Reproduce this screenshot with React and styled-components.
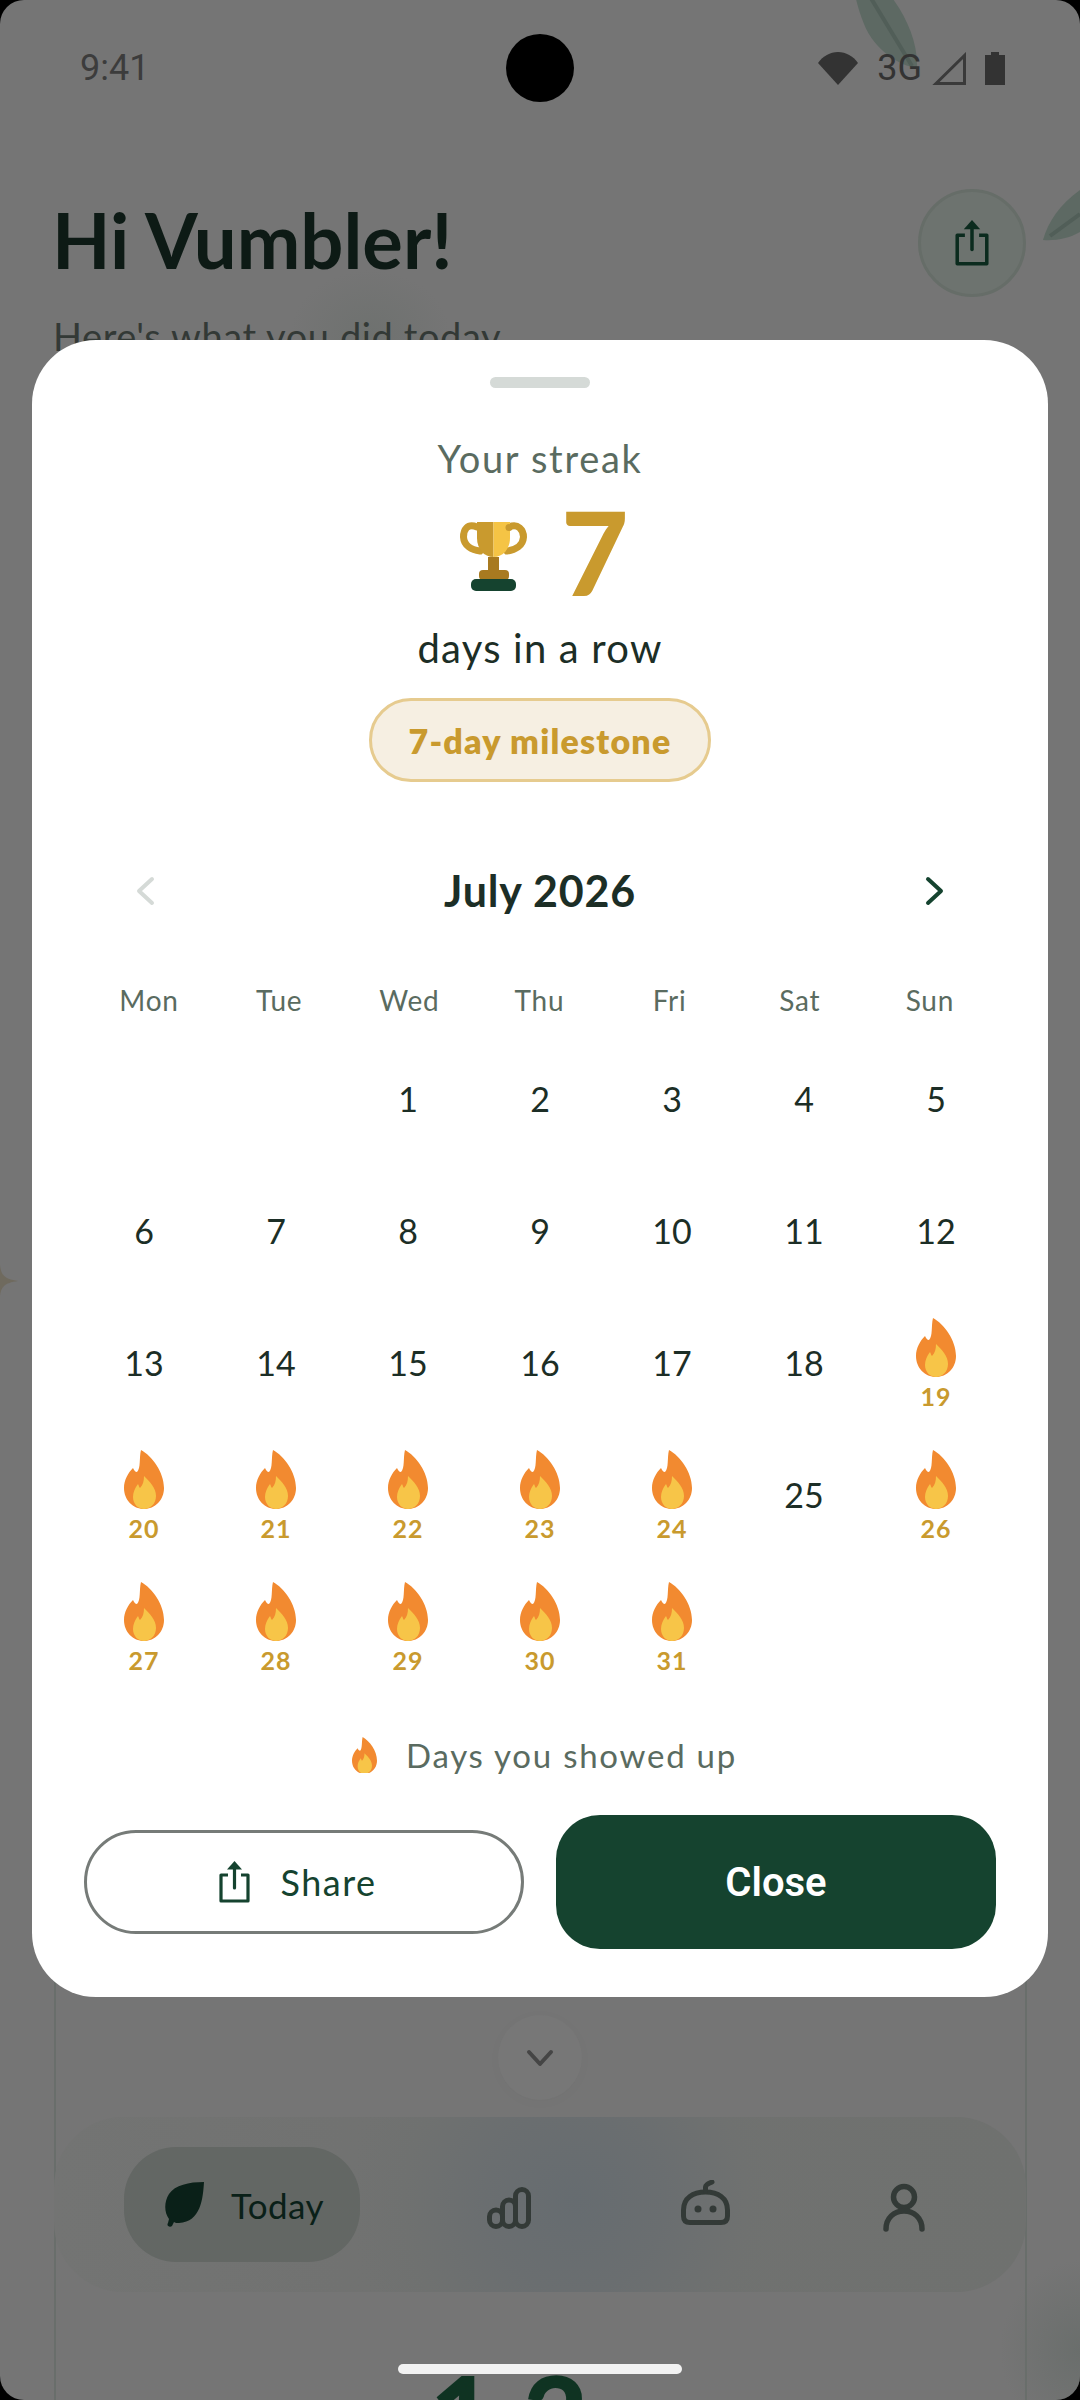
import React from "react";
import styled, { createGlobalStyle } from "styled-components";

const Global = createGlobalStyle`
  html, body { margin: 0; padding: 0; background: #000; }
  * { box-sizing: border-box; }
`;
const sans = `"Lato", "Noto Sans", sans-serif`;
const roboto = `"Roboto", "Liberation Sans", sans-serif`;

const Screen = styled.div`
  position: relative; width: 1080px; height: 2400px; overflow: hidden;
  background: #757575; border-radius: 24px; font-family: ${sans};
`;
const StatusBar = styled.div`
  position: relative; height: 136px; padding: 0 75px 0 80px; display: flex; align-items: center; justify-content: space-between;
  font-family: ${roboto}; font-size: 36px; color: #3c3c3c;
`;
const Camera = styled.div`
  position: absolute; left: 506px; top: 34px; width: 68px; height: 68px; border-radius: 50%; background: #000;
`;
const StatusIcons = styled.div`display: flex; align-items: center; color: #333;`;
const NetLabel = styled.span`font-size: 36px; line-height: 36px; margin: 0 10px 0 19px;`;
const BatteryIcon = styled.svg`margin-left: 19px;`;
const Leaf = styled.svg`position: absolute; left: ${p => p.$x}px; top: ${p => p.$y}px;`;
const Blob = styled.div`
  position: absolute; left: ${p => p.$x}px; top: ${p => p.$y}px; width: ${p => p.$w}px; height: ${p => p.$h}px;
  background: radial-gradient(closest-side, ${p => p.$c}, rgba(117,117,117,0));
`;
const Header = styled.div`
  position: relative; display: flex; justify-content: space-between; align-items: flex-start; padding: 53px 54px 0 54px;
`;
const Title = styled.h1`
  margin: 5px 0 0 -2px; font-size: 76px; line-height: 92px; font-weight: 700; color: #0d1a15; font-family: ${sans};
`;
const Sub = styled.p`margin: 26px 0 0 -1px; font-size: 38px; line-height: 48px; color: #333936; letter-spacing: 0.6px;`;
const RoundBtn = styled.div`
  width: 108px; height: 108px; border-radius: 50%; background: #6d736f; border: 3px solid #666d68;
  display: flex; align-items: center; justify-content: center; color: #0b2b1e;
`;
const Card = styled.div`
  position: absolute; left: 54px; top: 1900px; width: 973px; height: 560px; border: 2px solid #696e6b; border-bottom: 0;
`;
const Chevron = styled.div`
  position: absolute; left: 498px; top: 2015px; width: 84px; height: 85px; border-radius: 50%;
  background: #777777; box-shadow: 0 2px 14px rgba(0,0,0,.025); display: flex; align-items: center; justify-content: center;
`;
const Nav = styled.div`
  position: absolute; left: 54px; top: 2117px; width: 972px; height: 175px; border-radius: 70px;
  background: radial-gradient(circle at 521px 84px, #666c70 0, #6a6e70 90px, #6f7170 170px, rgba(112,114,112,0) 225px),
    linear-gradient(to right, #737473, #717271 30%, #6f716f);
  display: flex; align-items: center; padding: 0 0 0 70px;
`;
const Pill = styled.div`
  width: 236px; height: 115px; border-radius: 52px; background: #636764; display: flex; align-items: center;
  gap: 26px; padding: 0 0 0 41px; font-size: 35px; color: #0a2018; letter-spacing: 0.4px;
`;
const NavIcon = styled.div`
  position: absolute; left: ${p => p.$x}px; top: ${p => p.$y}px; display: flex;
`;
const Home = styled.div`
  position: absolute; left: 398px; top: 2364px; width: 284px; height: 10px; border-radius: 5px; background: #f2f2f2;
`;
const BigNum = styled.div`
  position: absolute; left: 430px; top: 2350px; font-size: 112px; line-height: 130px; font-weight: 900; color: #0f3322; letter-spacing: 28px; font-family: ${sans};
`;
const Sheet = styled.div`
  position: absolute; left: 32px; top: 340px; width: 1016px; height: 1657px; background: #fff; border-radius: 64px;
  display: flex; flex-direction: column; align-items: center; padding-top: 37px;
`;
const Handle = styled.div`width: 100px; height: 11px; border-radius: 6px; background: #d5dad7;`;
const Eyebrow = styled.div`margin-top: 48px; font-size: 38px; line-height: 44px; color: #5a6b60; letter-spacing: 1.7px;`;
const StreakRow = styled.div`display: flex; align-items: center; height: 100px; margin-top: 22px; gap: 34px;`;
const TrophyBox = styled.div`display: flex; margin: 9px 0 0 9px;`;
const StreakNum = styled.div`font-size: 116px; line-height: 100px; font-weight: 900; color: #c99a2e;`;
const Days = styled.div`margin-top: 22px; font-size: 40px; line-height: 48px; color: #1c2e26; letter-spacing: 1.2px;`;
const Milestone = styled.div`
  margin-top: 26px; width: 342px; height: 84px; border-radius: 42px; background: #f6efe2; border: 3px solid #e6cb8f;
  display: flex; align-items: center; justify-content: center; font-size: 34px; font-weight: 800; color: #c99a2e; letter-spacing: 1.2px;
`;
const MonthRow = styled.div`
  margin-top: 84px; width: 100%; padding: 0 103px; display: flex; align-items: center; justify-content: space-between; height: 50px;
`;
const Month = styled.div`font-size: 43px; line-height: 50px; font-weight: 700; color: #1c2e26; letter-spacing: 0.8px;`;
const Weekdays = styled.div`
  margin-top: 66px; align-self: flex-start; margin-left: 52px; width: 911px; display: grid; grid-template-columns: repeat(7, 1fr);
`;
const Weekday = styled.div`text-align: center; font-size: 28px; line-height: 36px; color: #5a6b60; letter-spacing: 0.8px;`;
const Dates = styled.div`
  margin-top: 14px; align-self: flex-start; margin-left: 46px; display: grid; grid-template-columns: repeat(7, 132px); grid-auto-rows: 132px;
`;
const Cell = styled.div`
  display: flex; flex-direction: column; align-items: center; justify-content: center; grid-column: ${p => p.$start || "auto"};
  font-size: 34px; color: #1c2e26;
`;
const FlameNum = styled.div`margin: 7px 0 -2px; font-size: 25px; line-height: 24px; font-weight: 700; color: #c99a2e; letter-spacing: 1px;`;
const Legend = styled.div`
  margin: 43px 0 0 9px; display: flex; align-items: center; gap: 29px; font-size: 33px; line-height: 40px; color: #5a6b60; letter-spacing: 1.75px;
`;
const Actions = styled.div`
  margin-top: 40px; width: 100%; padding: 0 52px; display: flex; align-items: center; gap: 32px;
`;
const ShareBtn = styled.button`
  width: 440px; height: 104px; border-radius: 52px; border: 3px solid #767b78; background: #fff; color: #15432f;
  display: flex; align-items: center; justify-content: center; gap: 30px; font-family: ${sans}; font-size: 36px; letter-spacing: 1.5px; padding: 0 12px 0 0;
`;
const CloseBtn = styled.button`
  width: 440px; height: 134px; border-radius: 44px; border: 0; background: #15432f; color: #fff;
  font-family: ${roboto}; font-weight: 600; font-size: 40px; padding: 0;
`;

const Flame = ({ w = 40 }) => (
  <svg width={w} height={w * 59 / 40} viewBox="0 0 40 59" aria-hidden="true">
    <path fill="#f28a30" d="M17 0C28 6 40 22 40 38C40 50 31 59 20 59C9 59 0 50 0 38C0 30 4 23 9 18C10 20 11 22 13 22C17 18 15 8 17 0Z" />
    <path fill="#f7c548" d="M20 26C26 32 32 38 32 46C32 54 26 59 20 59C14 59 9 54 9 47C9 42 11 38 14 34C15 36 15 37 16 38C19 35 20 31 20 26Z" />
  </svg>
);
const Trophy = () => (
  <svg width="67" height="69" viewBox="0 0 67 69" aria-hidden="true">
    <path fill="none" stroke="#c99a2e" strokeWidth="7" strokeLinecap="round" d="M17 5C7 1 3.500 8 3.500 15C4 24 12 28 20 29" />
    <path fill="none" stroke="#c99a2e" strokeWidth="7" strokeLinecap="round" d="M49 5C58 1 63.500 8 63.500 15C63 24 55 28 47 29" />
    <path fill="#c99a2e" d="M17 0H33.500V35C24 35 17 27 17 16Z" />
    <path fill="#f5c445" d="M33.500 0H50V16C50 27 43 35 33.500 35Z" />
    <circle cx="49" cy="5.500" r="3.500" fill="#c99a2e" />
    <rect x="28" y="35" width="11" height="14" fill="#a87a20" />
    <rect x="19" y="48" width="30" height="10" rx="4" fill="#a87a20" />
    <rect x="11" y="57" width="45" height="12" rx="5" fill="#15432f" />
  </svg>
);
const ShareIcon = ({ w = 31, h = 42 }) => (
  <svg width={w} height={h} viewBox="0 0 31 42" fill="none" stroke="currentColor" aria-hidden="true">
    <path strokeWidth="3.200" strokeLinejoin="round" d="M9 14H2V40H29V14H22" />
    <path strokeWidth="3.200" strokeLinecap="round" d="M15.500 6V27" />
    <path fill="currentColor" stroke="none" d="M15.500 0L23 8.500H8Z" />
  </svg>
);
const ChevronIcon = ({ dir, color }) => (
  <svg width="20" height="30" viewBox="0 0 20 30" fill="none" stroke={color} strokeWidth="4" strokeLinecap="round" strokeLinejoin="round" aria-hidden="true">
    <path d={dir === "left" ? "M17 3L4 15L17 27" : "M3 3L16 15L3 27"} />
  </svg>
);

const FLAMES = new Set([19, 20, 21, 22, 23, 24, 26, 27, 28, 29, 30, 31]);
const days = Array.from({ length: 31 }, (_, i) => i + 1);

export default function App() {
  return (
    <>
      <Global />
      <Screen>
        <Blob $x={290} $y={270} $w={160} $h={130} $c="#6e716f" />
        <Blob $x={1000} $y={2260} $w={160} $h={180} $c="#6a6e6c" />
        <Leaf $x={850} $y={-10} width="72" height="90" viewBox="0 0 72 90">
          <path fill="#5d6963" d="M4 0H36C56 24 68 52 67 78C50 76 24 60 14 34C9 22 6 10 4 0Z" />
          <path stroke="#515e58" strokeWidth="4" fill="none" d="M16 0L62 76" />
        </Leaf>
        <Leaf $x={1040} $y={188} width="40" height="54" viewBox="0 0 40 54">
          <path fill="#5d6963" d="M40 2C20 16 8 34 3 52C16 53 30 50 40 44Z" />
          <path stroke="#515e58" strokeWidth="4" fill="none" d="M10 48L40 26" />
        </Leaf>
        <Leaf $x={-14} $y={1265} width="32" height="32" viewBox="0 0 32 32">
          <path fill="#6f6a5e" d="M14 0C15 10 18 14 32 16C18 18 15 22 14 32C13 22 10 18 0 16C10 14 13 10 14 0Z" />
        </Leaf>
        <StatusBar>
          <span>9:41</span>
          <StatusIcons>
            <svg width="40" height="33" viewBox="0 0 40 33"><path fill="#333" d="M0 11C5 4 12 0 20 0C28 0 35 4 40 11L20 33Z" /></svg>
            <NetLabel>3G</NetLabel>
            <svg width="34" height="33" viewBox="0 0 34 33"><path fill="none" stroke="#3a3a3a" strokeWidth="3" d="M4 31.500L32.500 3.500V31.500Z" /></svg>
            <BatteryIcon width="20" height="33" viewBox="0 0 20 33"><path fill="#333" d="M6 0H14V3H20V33H0V3H6Z" /></BatteryIcon>
          </StatusIcons>
        </StatusBar>
        <Camera />
        <Header>
          <div>
            <Title>Hi Vumbler!</Title>
            <Sub>Here's what you did today</Sub>
          </div>
          <RoundBtn><ShareIcon w={34} h={46} /></RoundBtn>
        </Header>

        <Card />
        <Chevron>
          <svg width="28" height="18" viewBox="0 0 28 18" fill="none" stroke="#454545" strokeWidth="4" strokeLinecap="round" strokeLinejoin="round"><path d="M3 3L14 15L25 3" /></svg>
        </Chevron>
        <Nav>
          <Pill>
            <svg width="40" height="46" viewBox="0 0 40 46" fill="#0a2018"><path d="M39 0C38 16 36 40 14 41C12 41 10 41 9 40L7 44C5 46 1 44 3 41L4 37C-1 30 -1 20 4 12C10 3 24 0 39 0Z" /></svg>
            Today
          </Pill>
        </Nav>
        <NavIcon $x={487} $y={2187}>
          <svg width="45" height="42" viewBox="0 0 45 42" fill="none" stroke="#333a37" strokeWidth="5"><rect x="2.500" y="23" width="13" height="16.500" rx="6.500" /><rect x="15.500" y="13" width="13" height="26.500" rx="6.500" /><rect x="28.500" y="2.500" width="13" height="37" rx="6.500" /></svg>
        </NavIcon>
        <NavIcon $x={681} $y={2180}>
          <svg width="49" height="45" viewBox="0 0 49 45" fill="none" stroke="#333a37" strokeWidth="5"><path d="M2.500 30C2.500 18 12 12 24.500 12C37 12 46.500 18 46.500 30V36C46.500 40 44.500 42.500 40 42.500H9C4.500 42.500 2.500 40 2.500 36Z" /><path d="M24.500 11V7C24.500 5 27 4 31 2" strokeLinecap="round" /><circle cx="17" cy="29" r="3.500" fill="#333a37" stroke="none" /><circle cx="32" cy="29" r="3.500" fill="#333a37" stroke="none" /></svg>
        </NavIcon>
        <NavIcon $x={883} $y={2183}>
          <svg width="42" height="49" viewBox="0 0 42 49" fill="none" stroke="#333a37" strokeWidth="5.500" strokeLinecap="round"><circle cx="21" cy="14" r="10.500" /><path d="M3 46C3 35 11 28 21 28C31 28 39 35 39 46" /></svg>
        </NavIcon>
        <BigNum>12</BigNum>
        <Home />

        <Sheet>
          <Handle />
          <Eyebrow>Your streak</Eyebrow>
          <StreakRow>
            <TrophyBox><Trophy /></TrophyBox>
            <StreakNum>7</StreakNum>
          </StreakRow>
          <Days>days in a row</Days>
          <Milestone>7-day milestone</Milestone>
          <MonthRow>
            <ChevronIcon dir="left" color="#d5dad7" />
            <Month>July 2026</Month>
            <ChevronIcon dir="right" color="#15432f" />
          </MonthRow>
          <Weekdays>
            {["Mon", "Tue", "Wed", "Thu", "Fri", "Sat", "Sun"].map(d => <Weekday key={d}>{d}</Weekday>)}
          </Weekdays>
          <Dates>
            {days.map(d => (
              <Cell key={d} $start={d === 1 ? 3 : undefined}>
                {FLAMES.has(d) ? (<><Flame /><FlameNum>{d}</FlameNum></>) : d}
              </Cell>
            ))}
          </Dates>
          <Legend><Flame w={25} /> Days you showed up</Legend>
          <Actions>
            <ShareBtn><ShareIcon />Share</ShareBtn>
            <CloseBtn>Close</CloseBtn>
          </Actions>
        </Sheet>
      </Screen>
    </>
  );
}
